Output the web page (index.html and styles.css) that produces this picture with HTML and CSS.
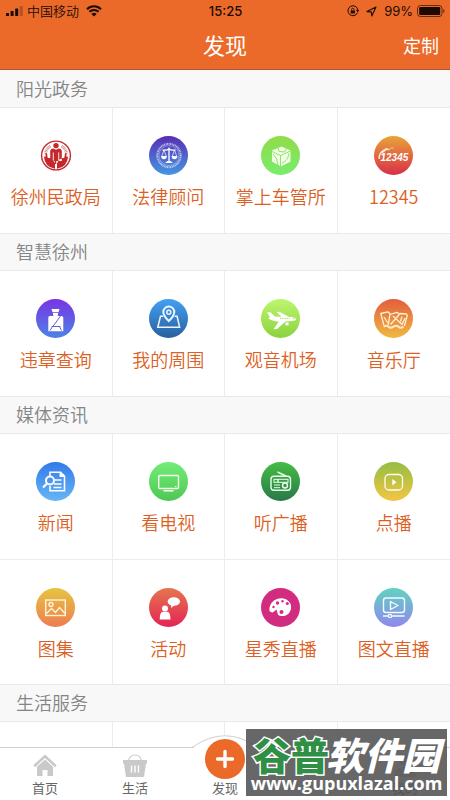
FILE: index.html
```html
<!DOCTYPE html>
<html lang="zh-CN">
<head>
<meta charset="utf-8">
<meta name="viewport" content="width=device-width, initial-scale=1">
<title>发现</title>
<link rel="stylesheet" href="styles.css">
</head>
<body>
<div class="app">
  <header class="top">
    <div class="status">
      <div class="status-side">
        <svg class="signal" viewBox="0 0 17 10" aria-hidden="true"><rect x="0" y="7" width="3" height="3" rx=".6"/><rect x="4.6" y="5" width="3" height="5" rx=".6"/><rect x="9.2" y="2.6" width="3" height="7.4" rx=".6"/><rect x="13.8" y="0" width="3" height="10" rx=".6" opacity=".25"/></svg>
        <span class="carrier">中国移动</span>
        <svg class="wifi" viewBox="0 0 16 12" aria-hidden="true"><path d="M1 4.2a10 10 0 0 1 14 0M3.4 6.8a6.6 6.6 0 0 1 9.2 0" fill="none" stroke="#1c0b04" stroke-width="2"/><path d="M5.4 8.9a3.8 3.8 0 0 1 5.2 0L8 11.5z"/></svg>
      </div>
      <span class="clock">15:25</span>
      <div class="status-side end">
        <svg class="lock" viewBox="0 0 12 12" aria-hidden="true"><path d="M10.6 7.6A5 5 0 1 1 10.9 5" fill="none" stroke="#1c0b04"/><path d="M9 5h3.2l-1.5 2.2zM3.7 5.4h4.2v3.2H3.7z"/><path d="M4.6 5.6V4.4a1.2 1.2 0 0 1 2.4 0v1.2" fill="none" stroke="#1c0b04" stroke-width=".8"/></svg>
        <svg class="arrow" viewBox="0 0 11 11" aria-hidden="true"><path d="M1 5.6 10 1 5.8 10 5.3 5.9z" fill="none" stroke="#1c0b04" stroke-width="1.1" stroke-linejoin="round"/></svg>
        <span>99%</span>
        <svg class="battery" viewBox="0 0 28 12" aria-hidden="true"><rect x=".5" y=".5" width="24.5" height="11" rx="3" fill="none" stroke="#1c0b04" opacity=".65"/><rect x="2.2" y="2" width="21" height="8" rx="1.2"/><path d="M26.2 4v4q1.4-.6 1.4-2t-1.4-2" opacity=".6"/></svg>
      </div>
    </div>
    <div class="nav">
      <h1>发现</h1>
      <button class="customize" type="button">定制</button>
    </div>
  </header>

  <main>
    <section>
      <h2>阳光政务</h2>
      <div class="grid">
        <a class="cell" href="#"><svg class="icon" viewBox="0 0 39 39" aria-hidden="true"><circle cx="20" cy="19.5" r="14.4" fill="#fff" stroke="#c5282b" stroke-width="1.4"/><path d="M9.500 17.500a10.500 10.500 0 0 1 5-7.500M30.500 17.500a10.500 10.500 0 0 0-5-7.500" fill="none" stroke="#cf8c88" stroke-width="3" stroke-dasharray=".8 .6"/><circle cx="20" cy="9.600" r="2.700" fill="#c5282b"/><path d="M14.200 15.500q0-3 3.300-3l2.500 1.200 2.500-1.200q3.300 0 3.300 3V25h-2.600v-8.500h-.9V25h-4.600v-8.500h-.9V25h-2.600zM7.800 20.500l1.700.5V17l1.500.2.700 4.500q5.300.3 7.300 5.800v5.200Q9 31.500 7.800 20.500M32.200 20.500l-1.700.5V17l-1.500.2-.7 4.500q-5.300.3-7.300 5.800v5.200q10-1.200 11.200-12.200" fill="#c5282b"/><path d="M19.500 16v12" stroke="#c5282b" stroke-width="1.500"/></svg><span>徐州民政局</span></a>
        <a class="cell" href="#"><svg class="icon law" viewBox="0 0 39 39" aria-hidden="true"><g fill="none" stroke="#fff"><circle cx="20" cy="19.500" r="11.700" stroke-width="2" stroke-dasharray="1 .6" opacity=".65"/><circle cx="20" cy="19.500" r="10" stroke-width=".5" opacity=".7"/><path d="M13.500 13.800q3.500.9 6.500-.6 3 1.500 6.500.6M20 11.500v14" stroke-width="1.300"/><path d="m15 14-2.300 6.500h4.600zM25.500 14l-2.300 6.500h4.600z" stroke-width=".7"/></g><path d="M12 20.300h6q-.5 3-3 3t-3-3M22.500 20.300h6q-.5 3-3 3t-3-3M18.500 25h3l2.500 2h-8z" fill="#fff"/></svg><span>法律顾问</span></a>
        <a class="cell" href="#"><svg class="icon cube" viewBox="0 0 39 39" aria-hidden="true"><path d="m20.500 10.500 9 4v11l-9.500 5-9-5v-11z" fill="#f1ffe8"/><path d="m11 15.500 8.500 4 10-4.500M19.500 19.500v11M17 11.500l1 4 5.500.5 2-3.500M12 18q4.500 4 5 11M28 17.500q-1 7-7 9.500" fill="none" stroke="#86df55" stroke-width=".9"/></svg><span>掌上车管所</span></a>
        <a class="cell" href="#"><svg class="icon hotline" viewBox="0 0 39 39" aria-hidden="true"><path d="M5.300 23q-1-6 5.500-9.300M7.500 17l6-4.500M11 13l4.500.5" fill="none" stroke="#ffead8" stroke-width="1.500"/><path d="M16 12.500q3-2 4 .5" fill="none" stroke="#ffd5a8" stroke-width=".8"/><text x="6.500" y="24.700" class="hotline-text">12345</text></svg><span>12345</span></a>
      </div>
    </section>
    <section>
      <h2>智慧徐州</h2>
      <div class="grid">
        <a class="cell" href="#"><svg class="icon police" viewBox="0 0 39 39" aria-hidden="true"><path d="M15.500 10h8l-1 3.200h-6zM17 14h5v2l-1 1.500h-3L17 16zM13.500 17h12q1.800 0 1.800 1.800v13.400h-15V18.800q0-1.800 1.200-1.800" fill="#fff"/><path d="m24.500 17-8 11M15.500 27.500h9M14 31.500l2.500-4M23.500 27.500l2 4" fill="none" stroke="#635de4"/></svg><span>违章查询</span></a>
        <a class="cell" href="#"><svg class="icon map" viewBox="0 0 39 39" aria-hidden="true"><g fill="none" stroke="#edf6ff" stroke-width="1.500"><path d="M14 17.300h-2.500L8.800 28.200h21.800l-2.500-10.900h-2.500"/><path d="M19.800 22q-5.500-5.200-5.500-9a5.500 5.500 0 0 1 11 0q0 3.800-5.500 9z" stroke-width="2"/><circle cx="19.800" cy="13.300" r="2"/></g></svg><span>我的周围</span></a>
        <a class="cell" href="#"><svg class="icon plane" viewBox="0 0 39 39" aria-hidden="true"><path d="M6 13.500 9 13l5 4.500 6.500.2-5-4.700 3-.2 9 5q7.500.4 7.700 2.200.2 2-6.700 2.300l-4 .2L16 30l-3.500.3 5.200-7.500q-6.200-.8-8-2L7 19l2-.7z" fill="#fff"/><path d="M24.500 23.500h3v2.700h-3z" fill="#fff"/><path d="M19 19.400h10" stroke="#a5de54" stroke-dasharray="1.300 1"/><path d="m31.500 19 2 .6" stroke="#a5de54"/></svg><span>观音机场</span></a>
        <a class="cell" href="#"><svg class="icon music" viewBox="0 0 39 39" aria-hidden="true"><path d="m9.800 26-3-11.500 7-1.700 2.200 2-1.700 11M10 18l4 6M16 15.500l7-2.200 2.500 2-9 10.200M19 17l9 8.500M25.500 14.500l7 .5.800 1.500-3 10.500M28 17.500l-1.500 5M31 19l-3 6.500" fill="none" stroke="#fff1d7" stroke-width="1.300" stroke-linejoin="round"/><path d="M9.500 27.700q3-2 5 0t5 0 5 0 5 0" fill="none" stroke="#ffe8c5" stroke-width="2"/></svg><span>音乐厅</span></a>
      </div>
    </section>
    <section>
      <h2>媒体资讯</h2>
      <div class="grid">
        <a class="cell" href="#"><svg class="icon news" viewBox="0 0 39 39" aria-hidden="true"><g fill="none" stroke="#fff"><path d="M14 15v-4.800h10.500l4 4v14.500H14V24M17.500 18h8M18 22h7.500M17.500 25.500h8" stroke-width="1.600"/><circle cx="14" cy="18.500" r="4" stroke-width="2"/><path d="m11 21.500-4 4" stroke-width="2.200"/></g><path d="M23.500 10v5h5z" fill="#fff"/></svg><span>新闻</span></a>
        <a class="cell" href="#"><svg class="icon tv" viewBox="0 0 39 39" aria-hidden="true"><g fill="none" stroke="#f2ffef"><rect x="9.700" y="13.500" width="19.800" height="13" rx="1" stroke-width="1.400"/><path d="M14.500 28.800h10" stroke-width="1.400"/><path d="M26 24.500h1.500"/></g></svg><span>看电视</span></a>
        <a class="cell" href="#"><svg class="icon radio" viewBox="0 0 39 39" aria-hidden="true"><g fill="none" stroke="#eaffea" stroke-width="1.400"><rect x="10" y="14.300" width="19.500" height="14" rx="3"/><path d="m16.500 10 8.500 4"/><rect x="13" y="17.300" width="14" height="3" stroke-width="1"/><circle cx="24" cy="23.500" r="2.500"/><path d="M13 23h6M13 25.700h6" stroke-width="1"/><path d="M17 17v3"/></g></svg><span>听广播</span></a>
        <a class="cell" href="#"><svg class="icon vod" viewBox="0 0 39 39" aria-hidden="true"><rect x="11" y="12.500" width="17.500" height="15.500" rx="4" fill="none" stroke="#fffdf0" stroke-width="1.300"/><path d="m18.300 17 4.200 3.300-4.200 3.300z" fill="#fff"/></svg><span>点播</span></a>
        <a class="cell" href="#"><svg class="icon photos" viewBox="0 0 39 39" aria-hidden="true"><g fill="none" stroke="#fff4d8" stroke-width="1.400"><rect x="9.700" y="12" width="19.600" height="15.500"/><circle cx="15" cy="16.500" r="2"/><path d="m10.500 25.500 5-5 4 4 4-5 5.500 6"/></g></svg><span>图集</span></a>
        <a class="cell" href="#"><svg class="icon event" viewBox="0 0 39 39" aria-hidden="true"><g fill="#fff"><circle cx="16" cy="20.500" r="3"/><path d="M10.700 31.500q0-7.500 3.300-7.800h4q3.500.3 3.500 7.800z"/><ellipse cx="24.800" cy="13.500" rx="6.200" ry="4.300"/><path d="m22 16 .2 4 4-3.500z"/></g></svg><span>活动</span></a>
        <a class="cell" href="#"><svg class="icon star" viewBox="0 0 39 39" aria-hidden="true"><path d="M8.500 23q-1-6 4.500-10.500 6-4 12.500-1 5.500 3.500 4.500 9.500-1.500 5.500-6 6.700-5 1.200-7-1l-1.500-5.200-2.500 2q-2 2-4.500-.5" fill="#fff"/><g fill="#d22c80"><circle cx="16.500" cy="15" r="1.700"/><circle cx="21.500" cy="13.200" r="1.200"/><circle cx="26.300" cy="15.500" r="1.500"/><circle cx="12.500" cy="19" r="1.200"/><circle cx="20.500" cy="24" r="2"/></g></svg><span>星秀直播</span></a>
        <a class="cell" href="#"><svg class="icon live" viewBox="0 0 39 39" aria-hidden="true"><g fill="none" stroke="#f1fcff" stroke-width="1.400"><rect x="9.500" y="10" width="21" height="14.500" rx="2.500"/><path d="m16.500 13.500 7.500 4-7.500 4z" stroke-linejoin="round"/><path d="M9 28h5.500M17.500 28h13"/><circle cx="16" cy="28" r="1.600"/></g></svg><span>图文直播</span></a>
      </div>
    </section>
    <section class="last">
      <h2>生活服务</h2>
      <div class="grid"><div class="cell"></div><div class="cell"></div><div class="cell"></div><div class="cell"></div></div>
    </section>
  </main>

  <nav class="tabs">
    <a class="tab" href="#"><svg class="tab-icon" viewBox="0 0 24 24" aria-hidden="true"><path d="m1.200 13.200 10.800-10 10.800 10" fill="none" stroke="#c9c9c9" stroke-width="2.600"/><path d="m4 13.800 8-7.300 8 7.300V23h-5.500v-6h-5v6H4z" fill="#c9c9c9"/></svg><span>首页</span></a>
    <a class="tab" href="#"><svg class="tab-icon" viewBox="0 0 24 24" aria-hidden="true"><path d="M5.500 8q1-6 6.500-6t6.500 6" fill="none" stroke="#c9c9c9" stroke-width="1.200"/><path d="M0 7h24v3.500h-1L21 24H3L1 10.500H0z" fill="#c9c9c9"/><path d="M8.500 12.500v7M12 12.500v7M15.500 12.500v7" stroke="#fff" stroke-width="1.400"/></svg><span>生活</span></a>
    <a class="tab" href="#"><svg class="bump" viewBox="0 0 90 14" aria-hidden="true"><path d="M12 14Q45-13 78 14z" fill="#fff"/><path d="M12 12.500Q45-11 78 12.500" fill="none" stroke="#d0d0d0"/></svg><svg class="plus" viewBox="0 0 40 40" aria-hidden="true"><circle cx="20" cy="20" r="20" fill="#eb6a2a"/><path d="M12.500 20h15M20 12.500v15" stroke="#fff" stroke-width="3.400" stroke-linecap="round"/></svg><span>发现</span></a>
    <a class="tab" href="#" aria-label="互动"><svg class="tab-icon raised" viewBox="0 0 24 24" aria-hidden="true"><path d="M1 3h22v15H13l-5 5v-5H1z" fill="#c9c9c9"/></svg></a>
    <a class="tab" href="#"><svg class="tab-icon" viewBox="0 0 24 24" aria-hidden="true"><circle cx="12" cy="7" r="6" fill="#c9c9c9"/><path d="M1 24q0-10 11-10t11 10z" fill="#c9c9c9"/></svg><span>我的</span></a>
  </nav>

  <div class="watermark">
    <div class="brand"><b>谷普</b><i>软件园</i></div>
    <div class="url">www.gupuxlazal.com</div>
  </div>
</div>
</body>
</html>
```
FILE: styles.css
```css
* { box-sizing: border-box; }

body {
  margin: 0;
  background: #fff;
  font-family: "Noto Sans CJK SC", sans-serif;
  color: #1c0b04;
}

a { color: inherit; text-decoration: none; }
h1, h2 { margin: 0; font-weight: 400; }

.app {
  position: relative;
  display: flex;
  flex-direction: column;
  height: 100vh;
  overflow: hidden;
}

.top { background: #eb6a2a; }

.status {
  display: flex;
  align-items: center;
  height: 22px;
  padding: 0 5px 0 6px;
  font-size: 13px;
  line-height: 22px;
}

.status-side { display: flex; flex: 1; align-items: center; gap: 4px; }
.status-side.end { justify-content: flex-end; font-family: Inter, sans-serif; }
.status svg { fill: #1c0b04; }
.carrier { font-weight: 350; }
.clock { font: 500 13px/22px Inter, sans-serif; }
.signal { width: 17px; height: 10px; }
.wifi { width: 16px; height: 12px; margin-left: 3px; }
.lock { width: 12px; height: 12px; margin-right: 3px; overflow: visible; }
.arrow { width: 11px; height: 11px; margin-right: 3px; }
.battery { width: 28px; height: 12px; }

.nav {
  display: grid;
  grid-template-columns: 1fr auto 1fr;
  align-items: center;
  height: 47px;
  padding: 0 11px;
  color: #fff;
}

.nav h1 {
  grid-column: 2;
  padding-bottom: 3px;
  font-size: 22px;
  line-height: 32px;
}

.customize {
  justify-self: end;
  padding: 0 0 2px;
  border: 0;
  background: none;
  color: inherit;
  font: 400 18px/32px "Noto Sans CJK SC", sans-serif;
}

main { display: flex; flex: 1; flex-direction: column; min-height: 0; }
section { flex: none; }

h2 {
  height: 38px;
  padding-left: 16px;
  border-bottom: 1px solid #e9e9e9;
  background: #f8f8f8;
  color: #858585;
  font-size: 18px;
  font-weight: 350;
  line-height: 36px;
}

section + section h2 { border-top: 1px solid #e9e9e9; line-height: 35px; }
section:first-child h2 { height: 39px; border-top: 1px solid #a85a35; }

.grid { display: grid; grid-template-columns: repeat(4, 1fr); }

.cell {
  display: flex;
  flex-direction: column;
  align-items: center;
  height: 125px;
  padding-top: 28px;
  border-right: 1px solid #ececec;
  color: #dc5f24;
  font-size: 18px;
  line-height: 26px;
  white-space: nowrap;
}

.cell:nth-child(4n) { border-right: 0; }
.cell:nth-child(n + 5) { border-top: 1px solid #ececec; }
.cell span { margin-top: 8px; font-weight: 350; }
.last { flex: 1; min-height: 0; }

.icon { flex: none; width: 39px; height: 39px; border-radius: 50%; }
.law { background: linear-gradient(#592db4, #4597e2); }
.cube { background: linear-gradient(#91dc48, #78ec6c); }
.hotline { background: linear-gradient(#e9a338, #d92f49); }
.police { background: linear-gradient(#7934e4, #4c83e5); }
.map { background: linear-gradient(#43a0f2, #29609f); }
.plane { background: linear-gradient(#bdf66d, #8bd23f); }
.music { background: linear-gradient(#e45d3d, #f0b941); }
.news { background: linear-gradient(#327bea, #67b6f5); }
.tv { background: linear-gradient(#73ed78, #4fc753); }
.radio { background: linear-gradient(#46bd45, #28794a); }
.vod { background: linear-gradient(#93be44, #f3c644); }
.photos { background: linear-gradient(#e7c440, #ec7d53); }
.event { background: linear-gradient(#e5764e, #e42356); }
.star { background: #d22c80; }
.live { background: linear-gradient(#60d3c1, #9187ed); }

.hotline-text {
  fill: #fff;
  font: italic 700 10px "Liberation Sans", sans-serif;
}

.tabs {
  position: absolute;
  right: 0;
  bottom: 0;
  left: 0;
  display: grid;
  grid-template-columns: repeat(5, 1fr);
  height: 53px;
  border-top: 1px solid #d0d0d0;
  background: #fff;
}

.tab {
  position: relative;
  display: flex;
  flex-direction: column;
  align-items: center;
  justify-content: flex-end;
  padding-bottom: 3px;
  color: #666;
  font-size: 13px;
  line-height: 18px;
}

.tab-icon { width: 24px; height: 24px; margin-bottom: 2px; }
.tab-icon.raised { margin-bottom: 20px; }
.bump { position: absolute; top: -13px; width: 90px; height: 14px; }
.plus { position: absolute; top: -9px; width: 40px; height: 40px; }

.watermark {
  position: absolute;
  right: 3px;
  bottom: 4px;
  width: 201px;
  height: 67px;
  padding-top: 6px;
  background: rgba(82, 82, 82, .88);
  color: #fff;
  text-align: center;
  white-space: nowrap;
}

.brand {
  font-size: 38px;
  font-weight: 900;
  line-height: 38px;
}

.brand i { margin-left: -3px; }

.brand b {
  color: #2f8f45;
  font-weight: 900;
  -webkit-text-stroke: 3px #fff;
  paint-order: stroke fill;
}

.url {
  font: 700 18px/20px "Open Sans", sans-serif;
}
```
